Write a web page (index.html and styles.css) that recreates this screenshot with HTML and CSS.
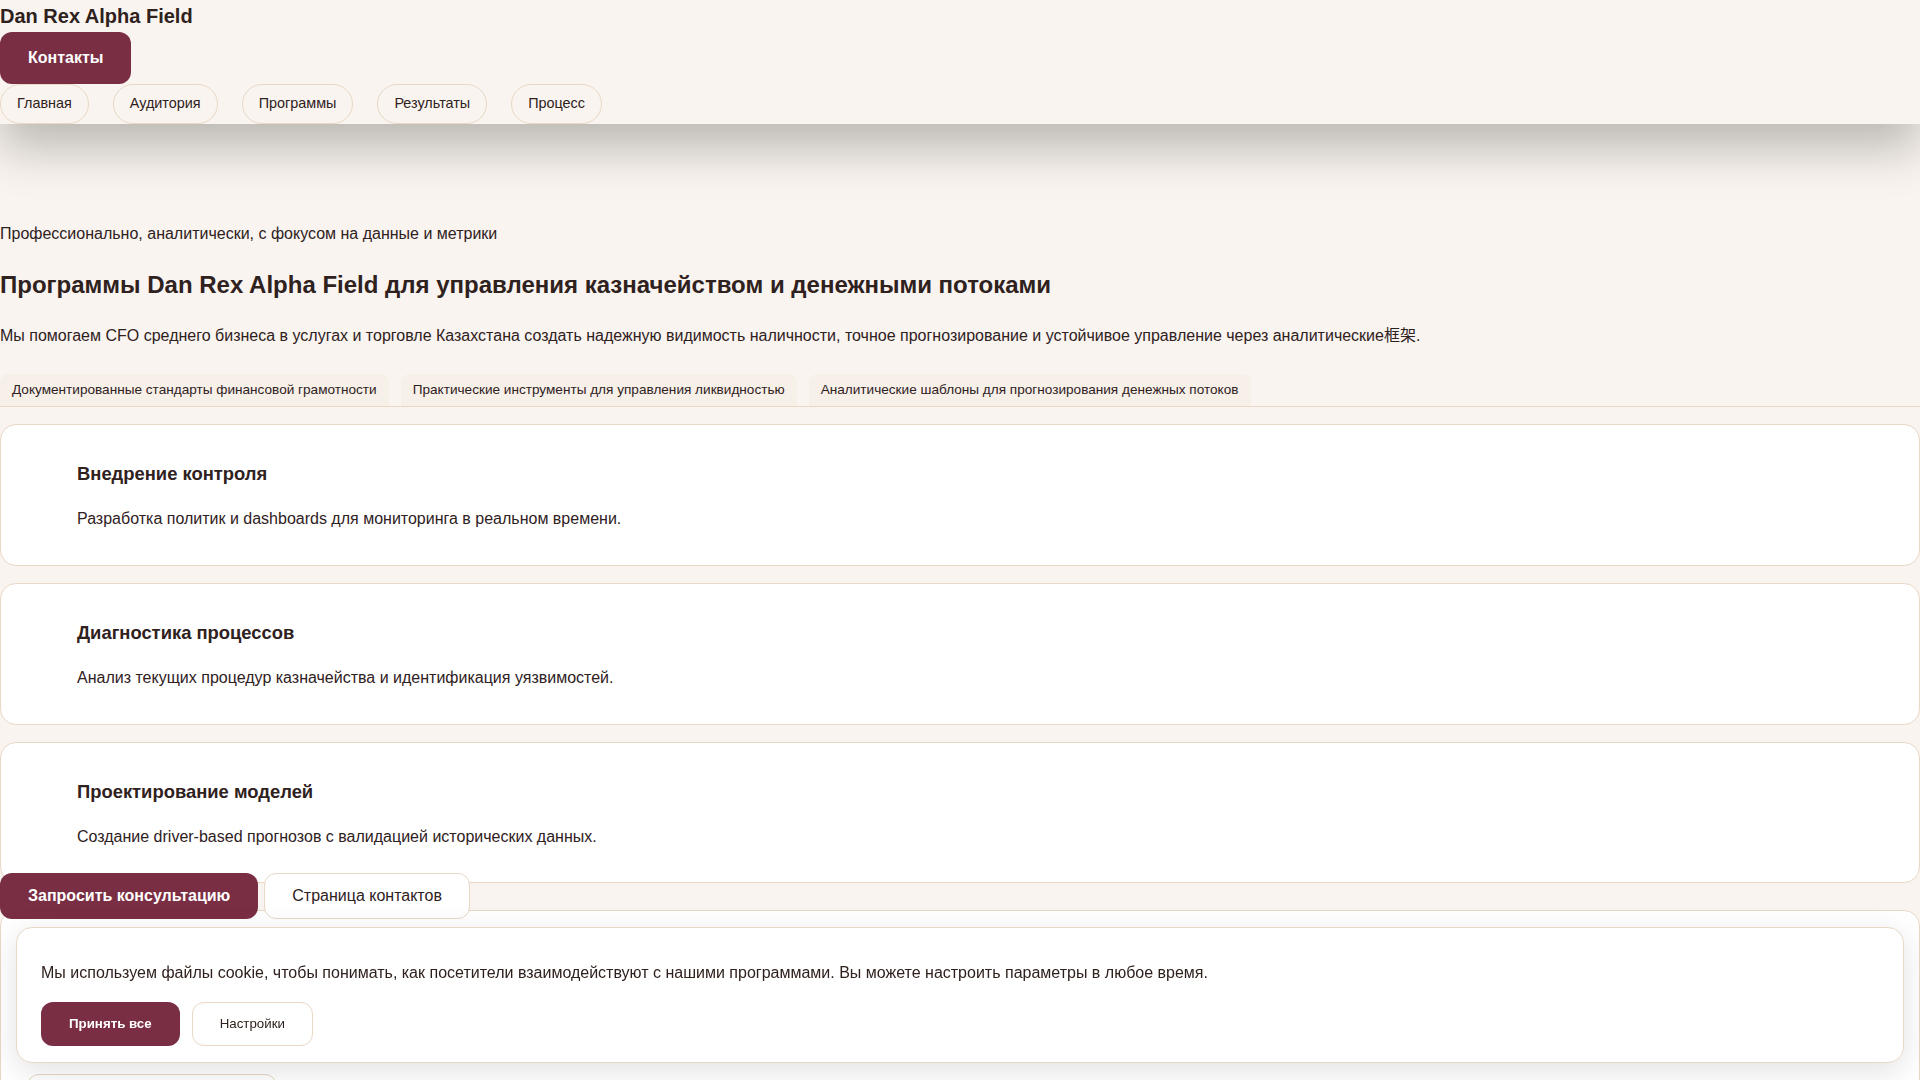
FILE: index.html
```html
<!DOCTYPE html>
<html lang="ru">
<head>
    <meta charset="UTF-8">
    <meta name="viewport" content="width=device-width, initial-scale=1.0">
    <title>Dan Rex Alpha Field — Программы</title>
    <link rel="stylesheet" href="styles.css">
</head>
<body>
    <header class="site-header">
        <div class="brand">Dan Rex Alpha Field</div>
        <a href="#contacts" class="btn btn-primary btn-header">Контакты</a>
        <nav class="main-nav">
            <a href="#" class="nav-pill">Главная</a>
            <a href="#" class="nav-pill">Аудитория</a>
            <a href="#" class="nav-pill">Программы</a>
            <a href="#" class="nav-pill">Результаты</a>
            <a href="#" class="nav-pill">Процесс</a>
        </nav>
    </header>

    <main class="page">
        <section class="hero">
            <p class="tone">Профессионально, аналитически, с фокусом на данные и метрики</p>
            <h2 class="hero-title">Программы Dan Rex Alpha Field для управления казначейством и денежными потоками</h2>
            <p class="lead">Мы помогаем CFO среднего бизнеса в услугах и торговле Казахстана создать надежную видимость наличности, точное прогнозирование и устойчивое управление через аналитические框架.</p>
        </section>

        <div class="tabs">
            <span class="tab">Документированные стандарты финансовой грамотности</span>
            <span class="tab">Практические инструменты для управления ликвидностью</span>
            <span class="tab">Аналитические шаблоны для прогнозирования денежных потоков</span>
        </div>

        <div class="cards">
            <div class="card">
                <h3>Внедрение контроля</h3>
                <p>Разработка политик и dashboards для мониторинга в реальном времени.</p>
            </div>
            <div class="card">
                <h3>Диагностика процессов</h3>
                <p>Анализ текущих процедур казначейства и идентификация уязвимостей.</p>
            </div>
            <div class="card">
                <h3>Проектирование моделей</h3>
                <p>Создание driver-based прогнозов с валидацией исторических данных.</p>
            </div>
        </div>

        <div class="actions">
            <a href="#" class="btn btn-primary">Запросить консультацию</a>
            <a href="#contacts" class="btn btn-secondary">Страница контактов</a>
        </div>

        <div class="card card-next" id="contacts">
            <div class="field"></div>
        </div>
    </main>

    <div class="cookie">
        <p>Мы используем файлы cookie, чтобы понимать, как посетители взаимодействуют с нашими программами. Вы можете настроить параметры в любое время.</p>
        <div class="cookie-actions">
            <button class="btn btn-primary btn-small">Принять все</button>
            <button class="btn btn-secondary btn-small">Настройки</button>
        </div>
    </div>
</body>
</html>
```

FILE: styles.css
```css
body {
    margin: 0;
    font-family: "Liberation Sans", Arial, "Noto Sans CJK SC", sans-serif;
    font-size: 16px;
    line-height: 1.6;
    color: #2f211d;
    background-color: #f9f4ef;
}
a {
    color: inherit;
    text-decoration: none;
}

/* header */
.site-header {
    position: relative;
    z-index: 2;
    background: #f9f4ef;
    box-shadow: 0 24px 48px rgba(0, 0, 0, 0.25);
}
.brand {
    font-size: 20px;
    font-weight: bold;
    line-height: 32px;
}
.btn {
    display: inline-block;
    font-family: inherit;
    font-size: 16px;
    line-height: 1.5;
    padding: 10px 27px;
    border: 1px solid transparent;
    border-radius: 12px;
    cursor: pointer;
}
.btn-primary {
    background: #7a2e43;
    color: #ffffff;
    font-weight: bold;
}
.btn-secondary {
    background: #ffffff;
    color: #2f211d;
    border-color: #e9d8c6;
}
.btn-header {
    padding: 13px 27px;
}
.main-nav {
    display: flex;
    gap: 24px;
}
.nav-pill {
    font-size: 14.4px;
    line-height: 1.5;
    padding: 8px 16px;
    border: 1px solid #e9d8c6;
    border-radius: 999px;
}

/* hero */
.hero {
    padding-top: 97px;
}
.tone {
    margin: 0;
}
.hero-title {
    font-size: 24px;
    line-height: 1.3;
    margin: 23px 0 23px;
}
.lead {
    margin: 0 0 25px;
}

/* tabs */
.tabs {
    display: flex;
    gap: 12px;
    border-bottom: 1px solid #e9d8c6;
}
.tab {
    font-size: 13.6px;
    line-height: 1.5;
    padding: 6px 12px;
    background: #f7f0e9;
    border-radius: 8px 8px 0 0;
}

/* cards */
.cards {
    display: flex;
    flex-direction: column;
    gap: 17px;
    margin-top: 17px;
}
.card {
    background: #ffffff;
    border: 1px solid #e9d8c6;
    border-radius: 16px;
    padding: 37px 76px 33px;
}
.card h3 {
    font-size: 18.4px;
    line-height: 23px;
    margin: 0 0 21px;
}
.card p {
    margin: 0;
}
.actions {
    position: relative;
    z-index: 1;
    display: flex;
    gap: 6px;
    margin-top: -10px;
}
.card-next {
    margin-top: -9px;
    padding: 163px 26px 40px;
}
.field {
    width: 248px;
    height: 44px;
    border: 1px solid #e9d8c6;
    border-radius: 12px;
}

/* cookie banner */
.cookie {
    position: fixed;
    left: 16px;
    right: 16px;
    bottom: 17px;
    z-index: 5;
    background: #ffffff;
    border: 1px solid #e9d8c6;
    border-radius: 16px;
    padding: 16px 24px;
    box-shadow: 0 8px 32px rgba(0, 0, 0, 0.12);
}
.cookie p {
    margin: 16px 0;
}
.cookie-actions {
    display: flex;
    gap: 12px;
}
.btn-small {
    font-size: 13.3px;
    padding: 11px 27px;
    line-height: 20px;
}
```
